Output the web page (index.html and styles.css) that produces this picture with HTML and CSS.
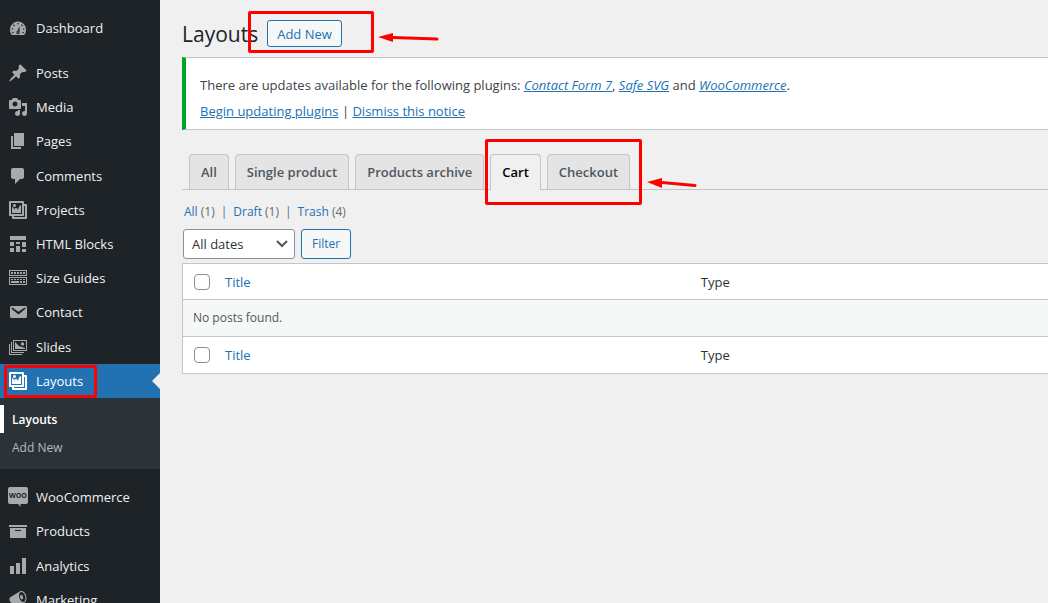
FILE: index.html
```html
<!DOCTYPE html>
<html lang="en">
<head>
    <meta charset="UTF-8">
    <meta name="viewport" content="width=device-width, initial-scale=1.0">
    <title>Layouts</title>
    <link rel="stylesheet" href="styles.css">
</head>
<body>
    <nav class="sidebar">
        <ul class="menu">
            <li><a class="menu-link" href="#"><svg viewBox="0 0 20 20"><path d="M3.8 17h12.4A8.6 8.6 0 0 0 18 11.8C18 7.2 14.4 3.5 10 3.5S2 7.2 2 11.8c0 1.9.7 3.8 1.8 5.2z"/><g class="cut"><circle cx="10" cy="5.8" r=".8"/><circle cx="6" cy="7.4" r=".8"/><circle cx="14" cy="7.4" r=".8"/><circle cx="4.4" cy="11" r=".8"/><circle cx="15.7" cy="11" r=".8"/><circle cx="5" cy="14.5" r=".8"/><circle cx="15" cy="14.500" r=".8"/><path d="M11.500 8l.1 5.800a1.700 1.700 0 1 1-2-1z"/></g><circle cx="10" cy="14.200" r=".6"/></svg>Dashboard</a></li>
        </ul>
        <ul class="menu menu-content">
            <li><a class="menu-link" href="#"><svg viewBox="0 0 20 20"><path d="M10.44 3.02l1.82-1.82 6.36 6.35-1.83 1.82c-1.05-.68-2.48-.57-3.41.36l-.75.75c-.92.93-1.04 2.35-.35 3.41l-1.83 1.82-2.41-2.41-2.8 2.79c-.42.42-3.38 2.71-3.8 2.29s1.86-3.39 2.28-3.81l2.79-2.79L4.1 9.36l1.83-1.82c1.05.69 2.48.57 3.4-.36l.75-.75c.93-.92 1.05-2.35.36-3.41z"/></svg>Posts</a></li>
            <li><a class="menu-link" href="#"><svg viewBox="0 0 20 20"><path d="M13 11V4c0-.55-.45-1-1-1h-1.67L9 1H5L3.67 3H2c-.55 0-1 .45-1 1v7c0 .55.45 1 1 1h10c.55 0 1-.45 1-1zM7 4.5c1.38 0 2.5 1.12 2.5 2.5S8.38 9.5 7 9.5 4.5 8.38 4.5 7 5.62 4.5 7 4.5zM14 6h5v10.5c0 1.38-1.12 2.5-2.5 2.5S14 17.88 14 16.5s1.12-2.5 2.5-2.5c.17 0 .34.02.5.05V9h-3V6zm-4 8.05V13h2v3.5c0 1.38-1.12 2.5-2.5 2.5S7 17.88 7 16.5 8.12 14 9.5 14c.17 0 .34.02.5.05z"/></svg>Media</a></li>
            <li><a class="menu-link" href="#"><svg viewBox="0 0 20 20"><path d="M6 15V2h10v13H6zm-1 1h8v2H3V5h2v11z"/></svg>Pages</a></li>
            <li><a class="menu-link" href="#"><svg viewBox="0 0 20 20"><path d="M5 2h9c1.1 0 2 .9 2 2v7c0 1.1-.9 2-2 2h-2l-5 5v-5H5c-1.1 0-2-.9-2-2V4c0-1.1.9-2 2-2z"/></svg>Comments</a></li>
            <li><a class="menu-link" href="#"><svg viewBox="0 0 20 20"><path d="M16 4h1.96c.57 0 1.04.47 1.04 1.04v12.92c0 .57-.47 1.04-1.04 1.04H5.04C4.47 19 4 18.53 4 17.96V16H2.04C1.47 16 1 15.53 1 14.96V2.04C1 1.47 1.47 1 2.04 1h12.92c.57 0 1.04.47 1.04 1.04V4zM3 14h11V3H3v11zm5-8.5C8 4.67 7.33 4 6.5 4S5 4.67 5 5.5 5.67 7 6.5 7 8 6.33 8 5.5zm2 4.5s1-5 3-5v8H4V7c2 0 2 3 2 3s.33-2 2-2 2 2 2 2zm7 7V6h-1v8.96c0 .57-.47 1.04-1.04 1.04H6v1h11z"/></svg>Projects</a></li>
            <li><a class="menu-link" href="#"><svg viewBox="0 0 20 20"><path d="M2 2h16v4H2V2zm0 10V8h4v4H2zm6-2V8h4v2H8zm6 3V8h4v5h-4zm-6 5v-6h4v6H8zm-6 0v-4h4v4H2zm12 0v-3h4v3h-4z"/></svg>HTML Blocks</a></li>
            <li><a class="menu-link" href="#"><svg viewBox="0 0 20 20"><path fill-rule="evenodd" d="M1 2h18v6H1zM2 3v4h16V3zM1 9h18v8H1zM2 10v6h16v-6zM3 4h2v2H3zM6 4h2v2H6zM9 4h2v2H9zM12 4h2v2h-2zM15 4h2v2h-2zM3 11h2v1H3zM6 11h2v1H6zM9 11h2v1H9zM12 11h2v1h-2zM15 11h2v1h-2zM3 13h8v2H3zM12 13h2v2h-2zM15 13h2v2h-2z"/></svg>Size Guides</a></li>
            <li><a class="menu-link" href="#"><svg viewBox="0 0 20 20"><path d="M3.87 4h13.25C18.37 4 19 4.59 19 5.79v8.42c0 1.19-.63 1.79-1.88 1.79H3.87c-1.25 0-1.88-.6-1.88-1.79V5.79c0-1.2.63-1.79 1.88-1.79zm6.62 8.6l6.74-5.53c.24-.2.43-.66.13-1.07-.29-.41-.82-.42-1.17-.17l-5.7 3.86L4.8 5.83c-.35-.25-.88-.24-1.17.17-.3.41-.11.87.13 1.07z"/></svg>Contact</a></li>
            <li><a class="menu-link" href="#"><svg viewBox="0 0 20 20"><path fill-rule="evenodd" d="M5 3h14v11H5zM6 4v9h12V4zM3 5h1v10h12v1H3zM1 7h1v10h12v1H1zM7 5l4 4 6 2v1H7z"/><circle cx="14.5" cy="7" r="1.7"/></svg>Slides</a></li>
            <li class="current">
                <a class="menu-link" href="#"><svg viewBox="0 0 20 20"><path d="M16 4h1.96c.57 0 1.04.47 1.04 1.04v12.92c0 .57-.47 1.04-1.04 1.04H5.04C4.47 19 4 18.53 4 17.96V16H2.04C1.47 16 1 15.53 1 14.96V2.04C1 1.47 1.47 1 2.04 1h12.92c.57 0 1.04.47 1.04 1.04V4zM3 14h11V3H3v11zm5-8.5C8 4.67 7.33 4 6.5 4S5 4.67 5 5.5 5.67 7 6.5 7 8 6.33 8 5.5zm2 4.5s1-5 3-5v8H4V7c2 0 2 3 2 3s.33-2 2-2 2 2 2 2zm7 7V6h-1v8.96c0 .57-.47 1.04-1.04 1.04H6v1h11z"/></svg>Layouts</a>
                <span class="mark mark-menu"></span>
            </li>
        </ul>
        <ul class="submenu">
            <li class="active"><a href="#">Layouts</a></li>
            <li><a href="#">Add New</a></li>
        </ul>
        <ul class="menu menu-shop">
            <li><a class="menu-link" href="#"><svg viewBox="0 0 20 20"><path d="M2 0h16a2 2 0 0 1 2 2v13a2 2 0 0 1-2 2h-5.500v3L10 17H2a2 2 0 0 1-2-2V2a2 2 0 0 1 2-2z"/><text class="woo" x="10" y="11" text-anchor="middle">WOO</text></svg>WooCommerce</a></li>
            <li><a class="menu-link" href="#"><svg viewBox="0 0 20 20"><path d="M19 4v2H1V4h18zM2 7h16v10H2V7zm11 3V9H7v1h6z"/></svg>Products</a></li>
            <li><a class="menu-link" href="#"><svg viewBox="0 0 20 20"><path d="M18 18V2h-4v16h4zM12 18V7H8v11h4zM6 18v-8H2v8h4z"/></svg>Analytics</a></li>
            <li><a class="menu-link" href="#"><svg viewBox="0 0 20 20"><path d="M18.15 5.94c.46 1.62.38 3.22-.02 4.48-.42 1.28-1.26 2.18-2.3 2.48-.16.06-.26.06-.4.06-.06.02-.12.02-.18.02-.06.02-.14.02-.22.02h-6.8l2.22 5.5c.02.14-.06.26-.14.34-.08.1-.24.16-.34.16H6.95c-.1 0-.26-.06-.34-.16-.08-.08-.16-.2-.14-.34l-1-5.5H4.25l-.02-.02c-.5.06-1.08-.18-1.54-.62s-.88-1.08-1.06-1.88c-.24-.8-.2-1.56-.02-2.2.18-.62.58-1.08 1.06-1.3l.02-.02 9-5.4c.1-.06.18-.1.24-.16.06-.04.14-.08.24-.12.16-.08.28-.12.5-.18 1.04-.3 2.24.1 3.22.98s1.84 2.24 2.26 3.86zm-2.58 5.98h-.02c.4-.1.74-.34 1.04-.7.58-.7.86-1.76.86-3.04 0-.64-.1-1.3-.28-1.98-.34-1.36-1.02-2.5-1.78-3.24s-1.68-1.1-2.46-.88c-.82.22-1.4.96-1.7 2-.32 1.04-.28 2.36.06 3.72.38 1.36 1 2.5 1.8 3.24.78.74 1.62 1.1 2.48.88zm-2.54-7.08c.22-.04.42-.02.62.04.38.16.76.48 1.02 1s.42 1.2.42 1.78c0 .3-.04.56-.12.8-.18.48-.44.84-.86.94-.34.1-.8-.06-1.14-.4s-.64-.86-.78-1.5c-.18-.62-.12-1.24.02-1.72s.48-.84.82-.94z"/></svg>Marketing</a></li>
        </ul>
    </nav>

    <main class="content">
        <header class="page-head">
            <h1>Layouts</h1>
            <div class="marked">
                <button class="button" type="button">Add New</button>
                <span class="mark mark-add"></span>
                <svg class="arrow arrow-add" viewBox="0 0 62 12"><path d="M0 6L15 2v3l44 1.500a1.500 1.500 0 0 1 0 3L15 8v3z"/></svg>
            </div>
        </header>

        <section class="notice">
            <p>There are updates available for the following plugins: <em><a href="#">Contact Form 7</a></em>, <em><a href="#">Safe SVG</a></em> and <em><a href="#">WooCommerce</a></em>.</p>
            <p><a href="#">Begin updating plugins</a> | <a href="#">Dismiss this notice</a></p>
        </section>

        <nav class="tabs">
            <a class="tab" href="#">All</a>
            <a class="tab" href="#">Single product</a>
            <a class="tab" href="#">Products archive</a>
            <div class="marked tab-pair">
                <a class="tab tab-active" href="#">Cart</a>
                <a class="tab" href="#">Checkout</a>
                <span class="mark mark-tabs"></span>
                <svg class="arrow arrow-tabs" viewBox="0 0 50 12"><path d="M0 4L15 0v3l33 3a1.500 1.500 0 0 1 0 3L15 6v4z"/></svg>
            </div>
        </nav>

        <ul class="views">
            <li><a href="#">All</a> (1)</li>
            <li><a href="#">Draft</a> (1)</li>
            <li><a href="#">Trash</a> (4)</li>
        </ul>

        <form class="filters">
            <div class="select-wrap">
                <select aria-label="Filter by date">
                    <option>All dates</option>
                </select>
                <svg viewBox="0 0 12 8"><path d="M1 1l5 5 5-5"/></svg>
            </div>
            <button class="button" type="button">Filter</button>
        </form>

        <table class="posts">
            <thead>
                <tr>
                    <th class="check"><input type="checkbox" aria-label="Select all"></th>
                    <th class="title"><a href="#">Title</a></th>
                    <th>Type</th>
                </tr>
            </thead>
            <tbody>
                <tr><td colspan="3">No posts found.</td></tr>
            </tbody>
            <tfoot>
                <tr>
                    <th class="check"><input type="checkbox" aria-label="Select all"></th>
                    <th class="title"><a href="#">Title</a></th>
                    <th>Type</th>
                </tr>
            </tfoot>
        </table>
    </main>
</body>
</html>
```

FILE: styles.css
```css
* { box-sizing: border-box; }
body { margin: 0; display: flex; height: 100vh; overflow: hidden; background: #f0f0f1; color: #3c434a; font-family: "Open Sans", sans-serif; font-size: 12px; line-height: 18px; }
ul { margin: 0; padding: 0; list-style: none; }
a { color: #2271b1; }

/* sidebar */
.sidebar { flex: 0 0 160px; background: #1d2327; padding-top: 11px; font-size: 13px; }
.menu { display: grid; grid-auto-rows: 1fr; margin-bottom: 11px; }
.menu-content { min-height: 342px; margin-bottom: 0; }
.menu-shop { min-height: 137px; }
.menu-link { display: flex; align-items: center; gap: 8px; height: 100%; min-height: 34px; padding: 0 8px; color: #f0f0f1; text-decoration: none; }
.menu-link svg { width: 20px; height: 20px; fill: #a7aaad; }
.menu-link .cut { fill: #1d2327; }
.menu-link .woo { font: bold 7px "Open Sans", sans-serif; fill: #1d2327; }
.current { position: relative; background: #2271b1; }
.current .menu-link { color: #fff; }
.current svg { fill: #fff; }
.current::after { content: ""; position: absolute; right: 0; top: 9px; border: 8px solid transparent; border-right-color: #f0f0f1; border-left: 0; }
.submenu { background: #2c3338; padding: 7px 0 8px; margin-bottom: 11px; font-size: 12px; }
.submenu a { display: block; padding: 6px 12px 4px; color: #b4b9be; text-decoration: none; }
.submenu .active a { padding-left: 8px; border-left: 4px solid #fff; color: #fff; font-weight: 600; }

/* content */
.content { flex: 1; min-width: 0; padding: 20px 0 0 22px; }
.page-head { display: flex; gap: 9px; height: 37px; }
h1 { margin: 0; font-size: 21px; font-weight: 400; line-height: 28px; color: #1d2327; }
.button { padding: 0 9px; border: 1px solid #2271b1; border-radius: 3px; background: #f6f7f7; color: #2271b1; font: inherit; cursor: pointer; }
.page-head .button { height: 27px; font-size: 13px; font-weight: 500; }
.notice { padding: 18px 14px 1px; border: 1px solid #c3c4c7; border-left: 4px solid #00a32a; border-right: 0; background: #fff; font-size: 13px; font-weight: 500; }
.notice p { margin: 0 0 8px; }

/* tabs */
.tabs { display: flex; gap: 6px; margin-top: 24px; padding-left: 7px; border-bottom: 1px solid #c3c4c7; }
.tab { height: 35px; padding: 8px 11px; border: 1px solid #c3c4c7; border-bottom: 0; border-radius: 4px 4px 0 0; background: #e4e4e4; color: #50575e; font-size: 13px; font-weight: 600; text-decoration: none; white-space: nowrap; }
.tab-pair { display: flex; gap: 6px; }
.tab-active { height: 36px; margin-bottom: -1px; background: #f0f0f1; color: #000; }

/* list controls */
.views { display: flex; padding: 13px 0 0 2px; color: #646970; }
.views a { text-decoration: none; }
.views li + li::before { content: "|"; margin: 0 6px; }
.filters { display: flex; gap: 6px; padding: 8px 0 4px 1px; }
.filters .button { height: 30px; padding: 0 10px; }
.select-wrap { position: relative; width: 112px; }
.select-wrap select { appearance: none; width: 100%; height: 30px; padding: 0 8px; border: 1px solid #8c8f94; border-radius: 3px; background: #fff; color: #2c3338; font: inherit; font-size: 13px; }
.select-wrap svg { position: absolute; right: 7px; top: 11px; width: 12px; height: 8px; fill: none; stroke: #50575e; stroke-width: 2; pointer-events: none; }

/* table */
.posts { width: 100%; table-layout: fixed; border-collapse: separate; border-spacing: 0; border: 1px solid #c3c4c7; border-right: 0; background: #fff; }
.posts th, .posts td { height: 36px; padding: 0 10px; text-align: left; font-weight: 400; }
.posts th { color: #2c3338; font-size: 13px; }
.posts thead th { height: 35px; }
.posts th a { text-decoration: none; }
.posts td { height: 38px; border: solid #c3c4c7; border-width: 1px 0; background: #f6f7f7; color: #50575e; }
.posts .check { width: 32px; padding-right: 0; }
.posts .title { width: 55%; }
.posts input { appearance: none; display: block; width: 16px; height: 16px; margin: 0 0 0 1px; border: 1px solid #8c8f94; border-radius: 4px; background: #fff; }

/* red callouts */
.marked { position: relative; }
.mark { position: absolute; border: 3px solid #f00; border-radius: 2px; pointer-events: none; }
.mark-menu { left: 4px; top: 1px; width: 93px; height: 33px; }
.mark-add { left: -19px; top: -9px; width: 126px; height: 42px; }
.mark-tabs { left: -5px; top: -15px; width: 157px; height: 66px; }
.arrow { position: absolute; fill: #f00; pointer-events: none; }
.arrow-add { left: 111px; top: 11px; width: 62px; height: 12px; }
.arrow-tabs { left: 157px; top: 24px; width: 50px; height: 12px; }
```
